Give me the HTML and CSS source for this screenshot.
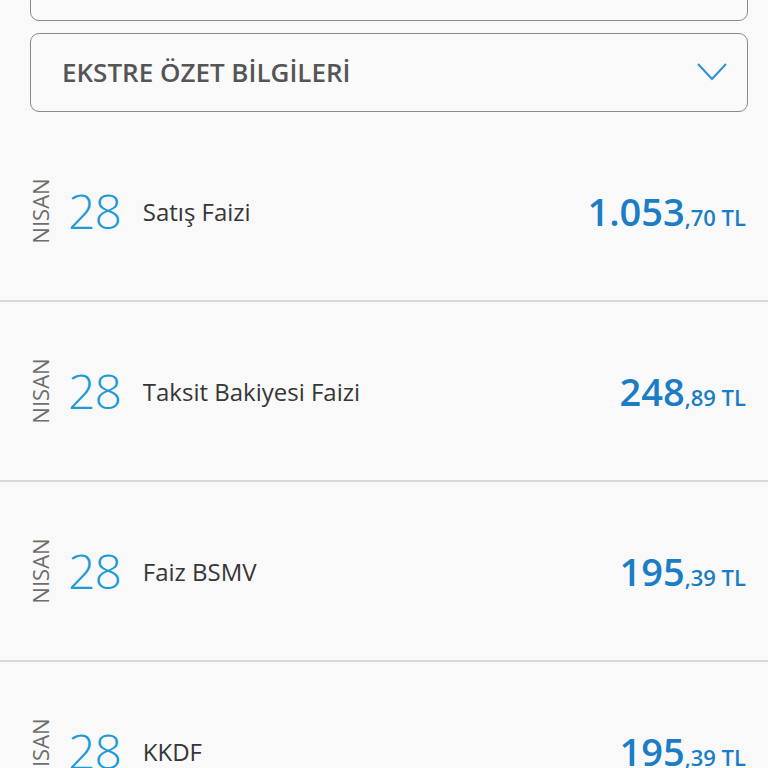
FILE: index.html
```html
<!DOCTYPE html>
<html lang="tr">
<head>
<meta charset="utf-8">
<link rel="stylesheet" href="styles.css">
</head>
<body>
<div class="page">
  <div class="card card-top"></div>
  <div class="card card-summary">
    <span class="card-title">EKSTRE ÖZET BİLGİLERİ</span>
    <svg class="chevron" width="30" height="18" viewBox="0 0 30 18"><path d="M1 1 L15 16 L29 1" fill="none" stroke="#2f8fcf" stroke-width="2"/></svg>
  </div>
  <div class="list">
    <div class="row">
      <div class="month"><span>NISAN</span></div>
      <div class="day">28</div>
      <div class="desc">Satış Faizi</div>
      <div class="amount"><span class="int">1.053</span><span class="dec">,70 TL</span></div>
    </div>
    <div class="row">
      <div class="month"><span>NISAN</span></div>
      <div class="day">28</div>
      <div class="desc">Taksit Bakiyesi Faizi</div>
      <div class="amount"><span class="int">248</span><span class="dec">,89 TL</span></div>
    </div>
    <div class="row">
      <div class="month"><span>NISAN</span></div>
      <div class="day">28</div>
      <div class="desc">Faiz BSMV</div>
      <div class="amount"><span class="int">195</span><span class="dec">,39 TL</span></div>
    </div>
    <div class="row">
      <div class="month"><span>NISAN</span></div>
      <div class="day">28</div>
      <div class="desc">KKDF</div>
      <div class="amount"><span class="int">195</span><span class="dec">,39 TL</span></div>
    </div>
  </div>
</div>
</body>
</html>
```
FILE: styles.css
```css
html, body {
  margin: 0;
  padding: 0;
  background: #f9f9f9;
  overflow: hidden;
  height: 768px;
}
.page {
  font-family: "Open Sans", "Noto Sans", sans-serif;
  display: flex;
  flex-direction: column;
}
.card {
  margin: 0 20px 0 30px;
  border: 1.5px solid #8a8a8a;
  border-radius: 9px;
  background: #fafafa;
  box-sizing: border-box;
}
.card-top {
  height: 40px;
  margin-top: -19px;
}
.card-summary {
  margin-top: 12px;
  height: 79px;
  display: flex;
  align-items: center;
  justify-content: space-between;
  padding: 0 20px 0 31px;
}
.card-title {
  font-size: 26px;
  font-weight: 600;
  color: #555555;
  letter-spacing: 0;
  margin-top: -2px;
}
.chevron {
  margin-top: -2px;
}
.list {
  margin-top: 10px;
  display: flex;
  flex-direction: column;
}
.row {
  box-sizing: border-box;
  height: 180px;
  flex-shrink: 0;
  border-bottom: 2px solid #d9d9d9;
  display: flex;
  align-items: center;
  padding: 0 22px 0 29px;
}
.month {
  width: 22px;
  height: 70px;
  display: flex;
  align-items: center;
  justify-content: center;
}
.month span {
  transform: rotate(-90deg);
  font-size: 22px;
  color: #6e6e6e;
  white-space: nowrap;
}
.day {
  margin-left: 17px;
  font-size: 48px;
  font-weight: 300;
  color: #1e9ad6;
  letter-spacing: -1px;
  line-height: 1;
}
.desc {
  margin-left: 22px;
  font-size: 24px;
  color: #363636;
  flex: 1;
}
.amount {
  color: #1a7dc6;
  font-weight: 600;
  white-space: nowrap;
}
.int {
  font-size: 38px;
}
.dec {
  font-size: 22px;
}
```
